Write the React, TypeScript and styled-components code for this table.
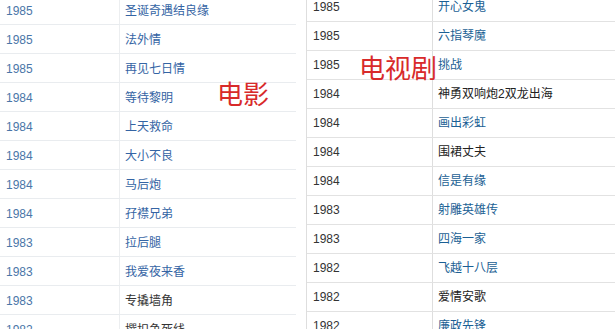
import React from 'react';
import styled, { createGlobalStyle } from 'styled-components';

type Row = { year: string; title: string; link: boolean };

const movies: Row[] = [
  { year: '1985', title: '圣诞奇遇结良缘', link: true },
  { year: '1985', title: '法外情', link: true },
  { year: '1985', title: '再见七日情', link: true },
  { year: '1984', title: '等待黎明', link: true },
  { year: '1984', title: '上天救命', link: true },
  { year: '1984', title: '大小不良', link: true },
  { year: '1984', title: '马后炮', link: true },
  { year: '1984', title: '孖襟兄弟', link: true },
  { year: '1983', title: '拉后腿', link: true },
  { year: '1983', title: '我爱夜来香', link: true },
  { year: '1983', title: '专撬墙角', link: false },
  { year: '1982', title: '撰扣争死线', link: false },
];

const dramas: Row[] = [
  { year: '1985', title: '开心女鬼', link: true },
  { year: '1985', title: '六指琴魔', link: true },
  { year: '1985', title: '挑战', link: true },
  { year: '1984', title: '神勇双响炮2双龙出海', link: false },
  { year: '1984', title: '画出彩虹', link: true },
  { year: '1984', title: '围裙丈夫', link: false },
  { year: '1984', title: '信是有缘', link: true },
  { year: '1983', title: '射雕英雄传', link: true },
  { year: '1983', title: '四海一家', link: true },
  { year: '1982', title: '飞越十八层', link: true },
  { year: '1982', title: '爱情安歌', link: false },
  { year: '1982', title: '廉政先锋', link: true },
];

const GlobalStyle = createGlobalStyle`
  html, body {
    margin: 0;
    padding: 0;
    background: #fff;
    overflow: hidden;
  }
  body {
    font-family: "Liberation Sans", "Noto Sans CJK SC", Arial, sans-serif;
    font-size: 12px;
  }
`;

const Page = styled.div`
  position: relative;
  display: flex;
  align-items: flex-start;
  width: 615px;
  height: 329px;
  overflow: hidden;
`;

const LeftTable = styled.div`
  width: 296px;
  margin-top: -4px;
  flex-shrink: 0;
`;

const RightTable = styled.div`
  width: 330px;
  margin-left: 10px;
  margin-top: -7px;
  flex-shrink: 0;
  border-left: 1px solid #dedede;
`;

const LeftRow = styled.div`
  display: grid;
  grid-template-columns: 120px 1fr;
  height: 29px;
  box-sizing: border-box;
  border-bottom: 1px solid #e9ecef;
`;

const RightRow = styled.div`
  display: grid;
  grid-template-columns: 126px 1fr;
  height: 29px;
  box-sizing: border-box;
  border-bottom: 1px solid #e2e2e2;
`;

const LeftYear = styled.div`
  padding: 2px 0 0 6px;
  line-height: 26px;
  color: #4a76a8;
  border-right: 1px solid #eceef0;
`;

const LeftTitle = styled.div<{ $link: boolean }>`
  padding: 2px 0 0 5px;
  line-height: 26px;
  color: ${p => (p.$link ? '#3464a4' : '#333')};
  white-space: nowrap;
`;

const RightYear = styled.div`
  padding-left: 6px;
  line-height: 28px;
  color: #333;
  border-right: 1px solid #dedede;
`;

const RightTitle = styled.div<{ $link: boolean }>`
  padding-left: 5px;
  line-height: 28px;
  color: ${p => (p.$link ? '#1b5f94' : '#222')};
  white-space: nowrap;
`;

const Label = styled.div<{ $x: number; $y: number }>`
  position: absolute;
  left: ${p => p.$x}px;
  top: ${p => p.$y}px;
  font-size: 26px;
  line-height: 30px;
  color: #d82a2a;
  font-family: "Noto Sans CJK SC", sans-serif;
  white-space: nowrap;
`;

export default function App() {
  return (
    <>
      <GlobalStyle />
      <Page>
        <LeftTable>
          {movies.map((r, i) => (
            <LeftRow key={i}>
              <LeftYear>{r.year}</LeftYear>
              <LeftTitle $link={r.link}>{r.title}</LeftTitle>
            </LeftRow>
          ))}
        </LeftTable>
        <RightTable>
          {dramas.map((r, i) => (
            <RightRow key={i}>
              <RightYear>{r.year}</RightYear>
              <RightTitle $link={r.link}>{r.title}</RightTitle>
            </RightRow>
          ))}
        </RightTable>
        <Label $x={217} $y={78}>电影</Label>
        <Label $x={359} $y={52}>电视剧</Label>
      </Page>
    </>
  );
}
